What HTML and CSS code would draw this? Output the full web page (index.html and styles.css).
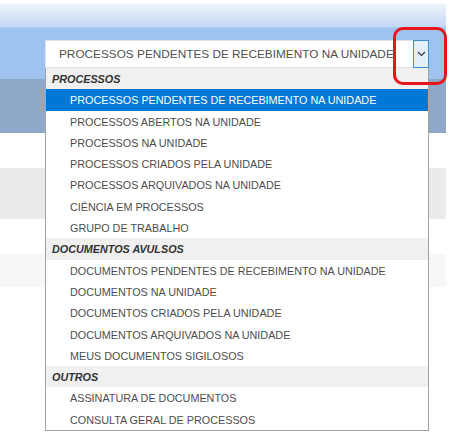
FILE: index.html
```html
<!DOCTYPE html>
<html lang="pt-BR">
<head>
  <meta charset="UTF-8">
  <title>Ponto de controle</title>
  <link rel="stylesheet" href="styles.css">
</head>
<body>
  <div class="screen">
    <div class="topbar">
      <div class="select-wrap">
        <div class="select">
          <span class="select-text">PROCESSOS PENDENTES DE RECEBIMENTO NA UNIDADE</span>
          <span class="select-btn">
            <svg width="9" height="6" viewBox="0 0 9 6"><path d="M1 1 L4.5 4.5 L8 1" fill="none" stroke="#333" stroke-width="1.2"/></svg>
          </span>
        </div>

        <ul class="dropdown">
          <li class="group">PROCESSOS</li>
          <li class="opt selected">PROCESSOS PENDENTES DE RECEBIMENTO NA UNIDADE</li>
          <li class="opt">PROCESSOS ABERTOS NA UNIDADE</li>
          <li class="opt">PROCESSOS NA UNIDADE</li>
          <li class="opt">PROCESSOS CRIADOS PELA UNIDADE</li>
          <li class="opt">PROCESSOS ARQUIVADOS NA UNIDADE</li>
          <li class="opt">CIÊNCIA EM PROCESSOS</li>
          <li class="opt">GRUPO DE TRABALHO</li>
          <li class="group">DOCUMENTOS AVULSOS</li>
          <li class="opt">DOCUMENTOS PENDENTES DE RECEBIMENTO NA UNIDADE</li>
          <li class="opt">DOCUMENTOS NA UNIDADE</li>
          <li class="opt">DOCUMENTOS CRIADOS PELA UNIDADE</li>
          <li class="opt">DOCUMENTOS ARQUIVADOS NA UNIDADE</li>
          <li class="opt">MEUS DOCUMENTOS SIGILOSOS</li>
          <li class="group">OUTROS</li>
          <li class="opt">ASSINATURA DE DOCUMENTOS</li>
          <li class="opt">CONSULTA GERAL DE PROCESSOS</li>
        </ul>
      </div>
    </div>
    <div class="band"></div>
    <div class="stripe"></div>
    <div class="stripe gray"></div>
    <div class="stripe"></div>
    <div class="stripe light"></div>
  </div>

  <!-- marcação vermelha em volta do botão -->
  <div class="callout"></div>
</body>
</html>
```

FILE: styles.css
```css
html, body {
  height: 100%;
}

body {
  margin: 0;
  min-height: 443px;
  background: #fff;
  font-family: 'Liberation Sans', Arial, sans-serif;
  position: relative;
}

.screen {
  width: 446px;
}

.topbar {
  height: 79px;
  padding-top: 40px;
  box-sizing: border-box;
  background: linear-gradient(to bottom, #fff 0, #fff 3px, #eef3fb 4px, #c3d8f4 27px, #9fc3f0 28px, #9fc3f0 100%);
}

.select-wrap {
  position: relative;
  margin-left: 45px;
  width: 384px;
}

.select {
  display: flex;
  align-items: stretch;
  height: 28px;
  box-sizing: border-box;
  background: #fff;
  border: 1px solid #dde3ea;
  border-right: none;
}

.select-text {
  flex: 1;
  padding-left: 13px;
  line-height: 26px;
  font-size: 11.8px;
  color: #505050;
  white-space: nowrap;
}

.select-btn {
  width: 16px;
  margin-top: -1px;
  height: 28px;
  box-sizing: border-box;
  border: 1px solid #3d8ed6;
  background: #e4effa;
  display: flex;
  align-items: center;
  justify-content: center;
}

.dropdown {
  position: absolute;
  top: 28px;
  left: 0;
  width: 384px;
  box-sizing: border-box;
  margin: 0;
  padding: 0;
  list-style: none;
  background: #fff;
  border: 1px solid #a3a3a3;
  border-top: none;
  z-index: 5;
}

.dropdown li {
  height: 21.3px;
  line-height: 22px;
  font-size: 10.8px;
  white-space: nowrap;
}

.group {
  background: #f0f0f0;
  color: #333;
  font-weight: bold;
  font-style: italic;
  padding-left: 6px;
}

.opt {
  color: #4d4d4d;
  padding-left: 24px;
}

.opt.selected {
  background: #0078d7;
  color: #fff;
}

.band {
  height: 54px;
  background: #8ea8c8;
}

.stripe {
  height: 35px;
}

.stripe.gray {
  height: 51px;
  background: #ebebeb;
}

.stripe.light {
  height: 33px;
  background: #f7f7f7;
}

.callout {
  position: absolute;
  left: 393px;
  top: 27px;
  width: 54px;
  height: 58px;
  box-sizing: border-box;
  border: 3px solid #e8141b;
  border-radius: 10px;
  z-index: 10;
}
```
